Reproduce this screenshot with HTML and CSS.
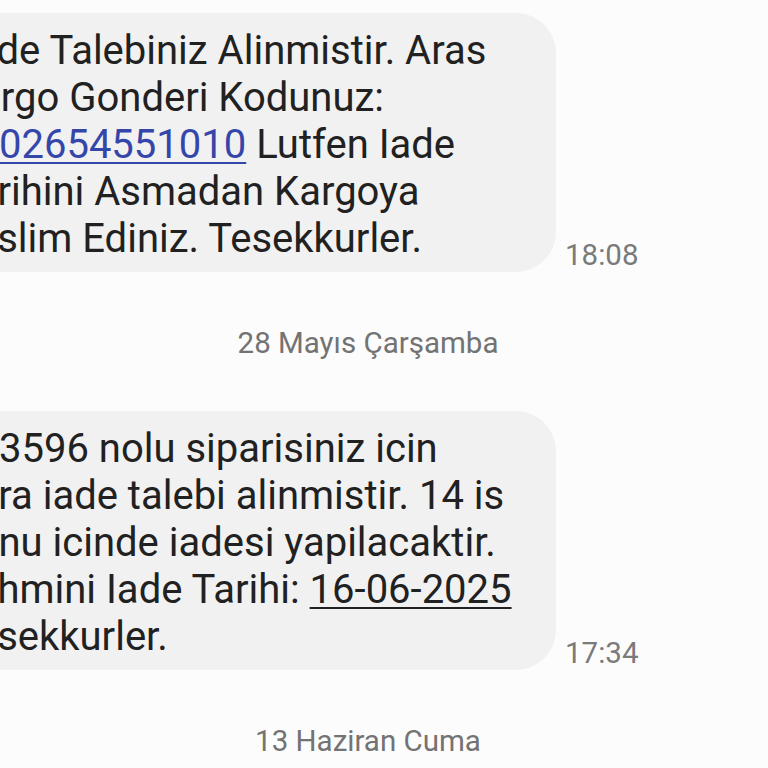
FILE: index.html
```html
<!DOCTYPE html>
<html lang="tr">
<head>
    <meta charset="UTF-8">
    <meta name="viewport" content="width=device-width, initial-scale=1.0">
    <title>Mesajlar</title>
    <link rel="stylesheet" href="styles.css">
</head>
<body>
<div id="page">
    <div class="thread">
        <div class="msg">
            <div class="bubble">
                <span class="ln">&nbsp;Iade Talebiniz Alinmistir. Aras</span>
                <span class="ln">Kargo Gonderi Kodunuz:</span>
                <span class="ln"><a class="link">5202654551010</a> Lutfen Iade</span>
                <span class="ln">Tarihini Asmadan Kargoya</span>
                <span class="ln">Teslim Ediniz. Tesekkurler.</span>
            </div>
            <span class="time">18:08</span>
        </div>

        <div class="date">28 Mayıs Çarşamba</div>

        <div class="msg">
            <div class="bubble">
                <span class="ln">143596 nolu siparisiniz icin</span>
                <span class="ln">para iade talebi alinmistir. 14 is</span>
                <span class="ln">gunu icinde iadesi yapilacaktir.</span>
                <span class="ln">Tahmini Iade Tarihi: <u class="date-link">16-06-2025</u></span>
                <span class="ln">Tesekkurler.</span>
            </div>
            <span class="time">17:34</span>
        </div>

        <div class="date">13 Haziran Cuma</div>
    </div>
</div>
</body>
</html>
```

FILE: styles.css
```css
html, body {
    margin: 0;
    background: #fcfcfc;
}
#page {
    width: 768px;
    height: 768px;
    overflow: hidden;
    padding-top: 13px;
    box-sizing: border-box;
}
/* the screenshot is cut on the left, so the thread starts off-screen */
.thread {
    margin-left: -70px;
    width: 876px;
    font-family: Roboto, "Liberation Sans", sans-serif;
}
.msg {
    display: flex;
    align-items: flex-end;
    gap: 9px;
}
.bubble {
    width: 626px;
    box-sizing: border-box;
    padding: 14px 24px 10px;
    background: #f1f1f1;
    border-radius: 40px;
    font-size: 40px;
    line-height: 47px;
    color: #212121;
    white-space: nowrap;
}
.ln {
    display: block;
}
.link {
    color: #3546ab;
    text-decoration: underline;
    text-decoration-thickness: 2px;
    text-underline-offset: 4px;
}
.date-link {
    text-decoration-thickness: 2px;
    text-underline-offset: 4px;
}
.time {
    font-size: 29.5px;
    color: #7a7a7a;
}
.date {
    padding: 54px 0 51px;
    text-align: center;
    font-size: 29.5px;
    line-height: 34px;
    color: #737373;
}
```
